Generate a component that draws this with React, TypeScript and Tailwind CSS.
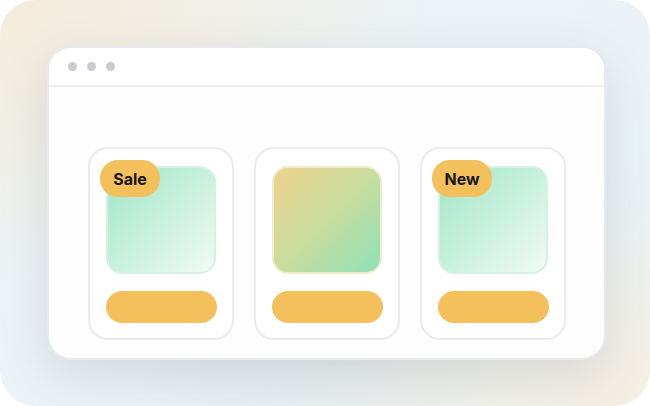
import type { ReactNode } from "react"

type Tile = {
    badge?: string
    swatch: string
}

const mint = "bg-[linear-gradient(135deg,#a1e6c7_0%,#c4efdb_45%,#f0faf6_100%)] border-[#d4f1e4]"

const tiles: Tile[] = [
    { badge: "Sale", swatch: mint },
    { swatch: "bg-[linear-gradient(135deg,#eed28e_0%,#c8dd9e_50%,#8fe1b8_100%)] border-[#f1ecc8]" },
    { badge: "New", swatch: mint },
]

function Badge({ children }: { children: ReactNode }) {
    return (
        <span className="absolute -left-[6px] -top-[6px] flex h-[37px] w-[60px] items-center justify-center rounded-[18px] bg-[#f3c05c] text-[16px] font-bold text-[#161616] [font-family:Inter,'Noto_Sans',sans-serif]">
            {children}
        </span>
    )
}

function ProductTile({ tile }: { tile: Tile }) {
    return (
        <div className="flex w-[146px] flex-col items-center rounded-[20px] border-2 border-[#ebebeb] bg-white pt-[17px] pb-[15px]">
            <div className="relative">
                <div className={`h-[108px] w-[110px] rounded-[16px] border-2 ${tile.swatch}`} />
                {tile.badge && <Badge>{tile.badge}</Badge>}
            </div>
            <div className="mt-[17px] h-[32px] w-[111px] rounded-full bg-[#f3c05c]" />
        </div>
    )
}

export default function App() {
    return (
        <div className="h-[406px] w-[650px] bg-white">
            <div className="h-[406px] w-[650px] rounded-[36px] bg-[radial-gradient(ellipse_at_0%_0%,#f4ecdb_0%,transparent_50%),radial-gradient(ellipse_at_100%_100%,#f5efe3_0%,transparent_45%),radial-gradient(ellipse_at_50%_60%,#dde2e5_0%,transparent_60%),linear-gradient(135deg,#eef3f5,#e8f2f9)] pl-[47px] pt-[46px]">
                <div className="flex h-[314px] w-[559px] flex-col overflow-hidden rounded-[24px] border-2 border-[#e8e9ec] bg-[#fdfdfd] shadow-[0_16px_50px_rgba(60,70,80,0.14)]">
                    <div className="flex h-[39px] shrink-0 items-center gap-[10px] border-b-2 border-[#eeeff1] bg-white pl-[19px]">
                        <span className="h-[9px] w-[9px] rounded-full bg-[#c9cbd1]" />
                        <span className="h-[9px] w-[9px] rounded-full bg-[#c9cbd1]" />
                        <span className="h-[9px] w-[9px] rounded-full bg-[#c9cbd1]" />
                    </div>
                    <div className="flex flex-1 items-start gap-[20px] pl-[39px] pt-[60px]">
                        {tiles.map((tile, i) => (
                            <ProductTile key={i} tile={tile} />
                        ))}
                    </div>
                </div>
            </div>
        </div>
    )
}
